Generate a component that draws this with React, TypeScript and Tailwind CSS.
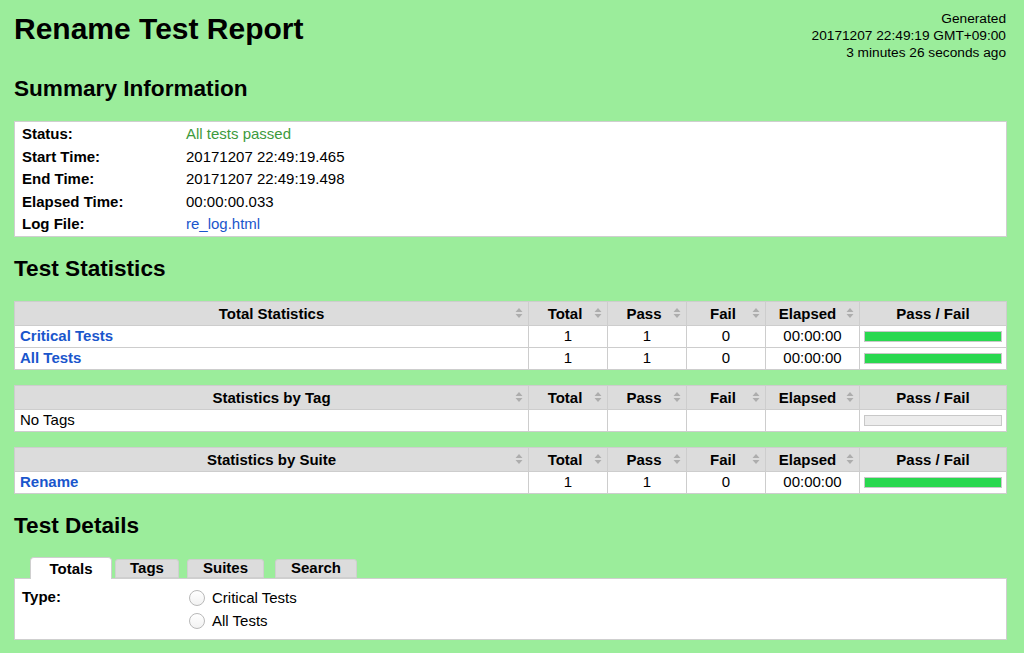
import React from "react";

const font = { fontFamily: '"Liberation Sans", Arial, Helvetica, sans-serif' };

function SortIcon() {
  return (
    <svg width="8" height="11" viewBox="0 0 8 11" className="absolute right-[5px] top-1/2 -translate-y-1/2">
      <path d="M4 0.5 L7.5 4.5 L0.5 4.5 Z" fill="#adadad" />
      <path d="M4 10.5 L7.5 6.5 L0.5 6.5 Z" fill="#adadad" />
    </svg>
  );
}

function Bar({ filled }: { filled: boolean }) {
  return (
    <div className="px-[4px] w-full">
      <div
        className={
          "h-[11px] w-full border border-[#c8c8c8] " +
          (filled ? "bg-[#29d84f]" : "bg-[#ececec]")
        }
      />
    </div>
  );
}

type Row = {
  name: string;
  link: boolean;
  total?: string;
  pass?: string;
  fail?: string;
  elapsed?: string;
  bar: boolean;
};

function StatTable({ title, rows }: { title: string; rows: Row[] }) {
  const head = "relative bg-[#dcdcdc] h-[23px] flex items-center justify-center font-bold pt-[1px]";
  const cell = "bg-white h-[21px] flex items-center justify-center";
  return (
    <div className="grid grid-cols-[513px_78px_78px_78px_93px_146px] gap-px bg-[#cdcdcd] p-px">
      <div className={head}>
        {title}
        <SortIcon />
      </div>
      <div className={head + " pr-[6px]"}>
        Total
        <SortIcon />
      </div>
      <div className={head + " pr-[6px]"}>
        Pass
        <SortIcon />
      </div>
      <div className={head + " pr-[6px]"}>
        Fail
        <SortIcon />
      </div>
      <div className={head + " pr-[10px]"}>
        Elapsed
        <SortIcon />
      </div>
      <div className={head}>Pass / Fail</div>
      {rows.map((r) => (
        <React.Fragment key={r.name}>
          <div className="bg-white h-[21px] flex items-center px-[5px]">
            {r.link ? (
              <span className="font-bold text-[#1a56cc]">{r.name}</span>
            ) : (
              <span>{r.name}</span>
            )}
          </div>
          <div className={cell}>{r.total}</div>
          <div className={cell}>{r.pass}</div>
          <div className={cell}>{r.fail}</div>
          <div className={cell}>{r.elapsed}</div>
          <div className={cell}>
            <Bar filled={r.bar} />
          </div>
        </React.Fragment>
      ))}
    </div>
  );
}

function Radio({ label }: { label: string }) {
  return (
    <div className="flex items-center h-[23px]">
      <div className="w-[16px] h-[16px] rounded-full border border-[#b9b9b9] bg-gradient-to-b from-white to-[#f2f2f2] mr-[7px]" />
      <span>{label}</span>
    </div>
  );
}

export default function App() {
  const summary: [string, React.ReactNode][] = [
    ["Status:", <span className="text-[#3d9a3d]">All tests passed</span>],
    ["Start Time:", "20171207 22:49:19.465"],
    ["End Time:", "20171207 22:49:19.498"],
    ["Elapsed Time:", "00:00:00.033"],
    ["Log File:", <span className="text-[#1a56cc]">re_log.html</span>],
  ];
  return (
    <div
      style={font}
      className="min-h-[653px] w-[1024px] bg-[#9bed9b] text-black text-[15px] pl-[14px] pr-[17px] pb-[20px]"
    >
      <div className="h-[74px] flex justify-between items-start">
        <h1 className="text-[30px] font-bold leading-[36px] mt-[11px]">Rename Test Report</h1>
        <div className="text-[13.7px] leading-[17px] text-right mt-[10px] pr-[1px]">
          <div>Generated</div>
          <div>20171207 22:49:19 GMT+09:00</div>
          <div>3 minutes 26 seconds ago</div>
        </div>
      </div>

      <h2 className="text-[22.6px] font-bold leading-[28px] mt-[1px]">Summary Information</h2>
      <div className="mt-[18px] bg-white border border-[#cfcfcf] pt-[1px]">
        {summary.map(([k, v]) => (
          <div key={k} className="flex items-center h-[22.6px]">
            <div className="w-[171px] pl-[7px] font-bold">{k}</div>
            <div>{v}</div>
          </div>
        ))}
      </div>

      <h2 className="text-[22.6px] font-bold leading-[28px] mt-[18px]">Test Statistics</h2>
      <div className="mt-[18px]">
        <StatTable
          title="Total Statistics"
          rows={[
            { name: "Critical Tests", link: true, total: "1", pass: "1", fail: "0", elapsed: "00:00:00", bar: true },
            { name: "All Tests", link: true, total: "1", pass: "1", fail: "0", elapsed: "00:00:00", bar: true },
          ]}
        />
      </div>
      <div className="mt-[15px]">
        <StatTable title="Statistics by Tag" rows={[{ name: "No Tags", link: false, bar: false }]} />
      </div>
      <div className="mt-[15px]">
        <StatTable
          title="Statistics by Suite"
          rows={[{ name: "Rename", link: true, total: "1", pass: "1", fail: "0", elapsed: "00:00:00", bar: true }]}
        />
      </div>

      <h2 className="text-[22.6px] font-bold leading-[28px] mt-[18px]">Test Details</h2>
      <div className="mt-[17px]">
        <div className="flex items-end h-[22px] relative z-10">
          <div className="ml-[16px] w-[82px] h-[22px] bg-white border border-b-0 border-[#cfcfcf] rounded-t-[4px] flex items-center justify-center font-bold pt-[2px]">
            Totals
          </div>
          <div className="ml-[3px] w-[64px] h-[19px] mb-[1px] bg-[#dcdcdc] border border-[#cfcfcf] rounded-t-[3px] flex items-center justify-center font-bold">
            Tags
          </div>
          <div className="ml-[8px] w-[77px] h-[19px] mb-[1px] bg-[#dcdcdc] border border-[#cfcfcf] rounded-t-[3px] flex items-center justify-center font-bold">
            Suites
          </div>
          <div className="ml-[11px] w-[82px] h-[19px] mb-[1px] bg-[#dcdcdc] border border-[#cfcfcf] rounded-t-[3px] flex items-center justify-center font-bold">
            Search
          </div>
        </div>
        <div className="-mt-[1px] bg-white border border-[#cfcfcf] h-[62px] flex pt-[8px]">
          <div className="w-[174px] pl-[7px] font-bold leading-[20px]">Type:</div>
          <div>
            <Radio label="Critical Tests" />
            <Radio label="All Tests" />
          </div>
        </div>
      </div>
    </div>
  );
}
